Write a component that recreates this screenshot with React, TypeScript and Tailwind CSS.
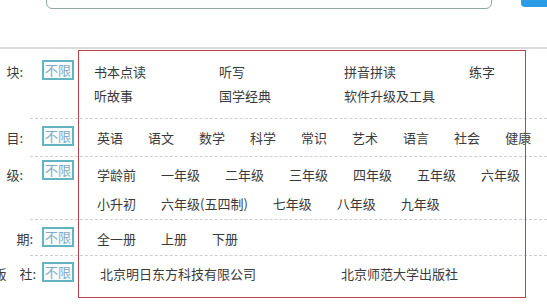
import React from 'react';

const FONT = { fontFamily: '"Noto Sans CJK SC", "Noto Sans", sans-serif' };

const Unlimited = () => (
  <div className="w-[32px] h-[20px] shrink-0 border-2 border-[#63b3c1] bg-[#f6fcfd] text-[#83a9c2] text-[13px] leading-[16px] flex items-center justify-center">
    不限
  </div>
);

const Dashed = () => <div className="ml-[30px] border-t border-dashed border-[#cfcfcf]" />;

type RowProps = {
  label: string;
  labelPad: string;
  lineH: string;
  pad: string;
  itemsMl: string;
  children: React.ReactNode;
};

const FilterRow = ({ label, labelPad, lineH, pad, itemsMl, children }: RowProps) => (
  <div className={`flex items-start ${pad}`}>
    <div className={`w-[42px] shrink-0 overflow-hidden flex justify-end whitespace-nowrap ${labelPad} ${lineH} text-[13px] text-[#3a3a3a]`}>
      {label}
    </div>
    <div className={`${lineH} flex items-center`}>
      <Unlimited />
    </div>
    <div className={`${itemsMl} ${lineH} text-[13px] text-[#3a3a3a] flex-1`}>{children}</div>
  </div>
);

export default function App() {
  return (
    <div className="relative w-[547px] h-[305px] overflow-hidden bg-white" style={FONT}>
      {/* search header */}
      <div className="h-[49px] border-b-2 border-[#dadada] flex items-start pl-[46px]">
        <div className="w-[446px] shrink-0 h-[36px] mt-[-27px] rounded-[6px] border border-[#8fa8a6] bg-[#fbfefd]" />
        <div className="ml-[29px] w-[40px] shrink-0 h-[34px] mt-[-27px] rounded-bl-[4px] bg-[#2b9de6]" />
      </div>

      {/* 模块 */}
      <FilterRow label="块:" labelPad="pr-[19px]" lineH="leading-[24px]" pad="pt-[11px] pb-[10px]" itemsMl="ml-[20px]">
        <div className="grid grid-cols-[repeat(4,125px)]">
          {['书本点读', '听写', '拼音拼读', '练字', '听故事', '国学经典', '软件升级及工具'].map((t) => (
            <span key={t}>{t}</span>
          ))}
        </div>
      </FilterRow>
      <Dashed />

      {/* 科目 */}
      <FilterRow label="目:" labelPad="pr-[19px]" lineH="leading-[24px]" pad="pt-[7px] pb-[6px]" itemsMl="ml-[23px]">
        <div className="flex whitespace-nowrap">
          {['英语', '语文', '数学', '科学', '常识', '艺术', '语言', '社会', '健康'].map((t) => (
            <span key={t} className="mr-[25px]">{t}</span>
          ))}
        </div>
      </FilterRow>
      <Dashed />

      {/* 年级 */}
      <FilterRow label="级:" labelPad="pr-[19px]" lineH="leading-[29px]" pad="pt-[3px] pb-[1px]" itemsMl="ml-[23px]">
        <div className="flex whitespace-nowrap">
          {['学龄前', '一年级', '二年级', '三年级', '四年级', '五年级', '六年级'].map((t) => (
            <span key={t} className="mr-[25px]">{t}</span>
          ))}
        </div>
        <div className="flex whitespace-nowrap">
          {['小升初', '六年级(五四制)', '七年级', '八年级', '九年级'].map((t) => (
            <span key={t} className="mr-[25px]">{t}</span>
          ))}
        </div>
      </FilterRow>
      <Dashed />

      {/* 学期 */}
      <FilterRow label="期:" labelPad="pr-[9px]" lineH="leading-[24px]" pad="pt-[7px] pb-[4px]" itemsMl="ml-[23px]">
        <div className="flex whitespace-nowrap">
          {['全一册', '上册', '下册'].map((t) => (
            <span key={t} className="mr-[25px]">{t}</span>
          ))}
        </div>
      </FilterRow>
      <Dashed />

      {/* 出版社 */}
      <FilterRow label={'版\u3000社:'} labelPad="pr-[6px]" lineH="leading-[24px]" pad="pt-[6px] pb-[10px]" itemsMl="ml-[26px]">
        <div className="flex whitespace-nowrap">
          <span className="w-[241px]">北京明日东方科技有限公司</span>
          <span>北京师范大学出版社</span>
        </div>
      </FilterRow>

      {/* highlight frame */}
      <div className="absolute left-[78px] top-[50px] w-[448px] h-[248px] border border-[#bf3f4a] pointer-events-none" />
    </div>
  );
}
